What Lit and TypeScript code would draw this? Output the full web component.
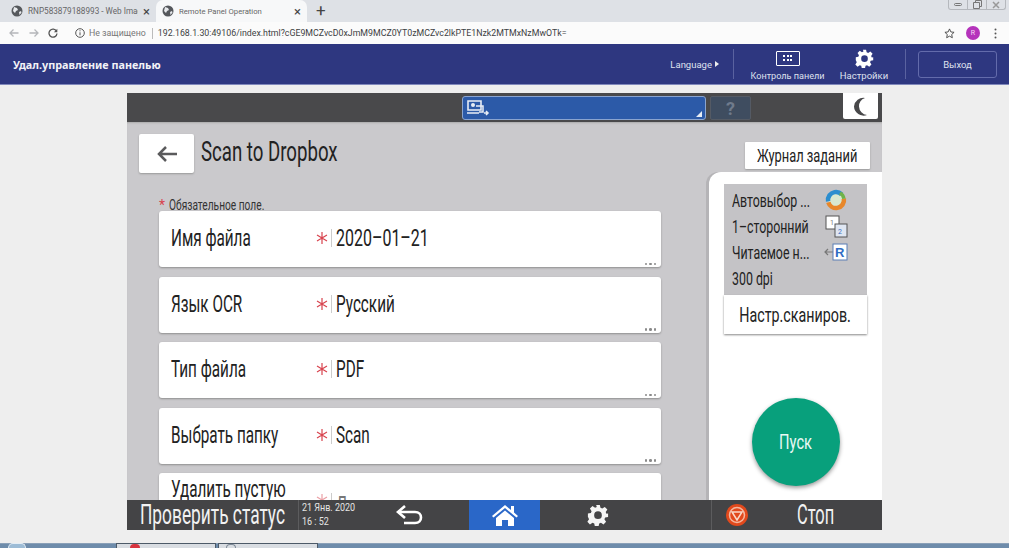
import { LitElement, html, css } from "lit";
import { customElement } from "lit/decorators.js";

const gear = (s: number, c = "#fff") => html`<svg width=${s} height=${s} viewBox="0 0 24 24"><path fill=${c} fill-rule="evenodd" d="M10 1h4l.7 3.2 1.9.8 2.8-1.8 2.8 2.8-1.8 2.8.8 1.9L23 10.4v3.700l-3.200.7-.8 1.900 1.800 2.800-2.800 2.800-2.800-1.800-1.900.8-.7 3.200h-4l-.7-3.200-1.900-.8-2.800 1.800-2.800-2.800 1.800-2.800-.8-1.900L1 14.100v-3.700l3.200-.7.8-1.900L3.200 5 6 2.200 8.800 4l1.900-.8zM12 8a4.200 4.200 0 1 0 0 8.400A4.200 4.200 0 0 0 12 8z"/></svg>`;

const globe = html`<svg width="12" height="12" viewBox="0 0 12 12" style="flex:none"><circle cx="6" cy="6" r="5.500" fill="#55585c"/><path fill="#e8eaed" d="M3 2l3 1 1 2-2 1-1 2-2-2zM8 7l2-1 .5 1.500L8.500 10z"/></svg>`;

const star = html`<svg width="12" height="14" viewBox="0 0 12 14"><path d="M6 1v12M1 4l10 6M11 4L1 10" stroke="#d8434e" stroke-width="1.200" fill="none"/></svg>`;

const fields = [
  ["Имя файла", "2020–01–21"],
  ["Язык OCR", "Русский"],
  ["Тип файла", "PDF"],
  ["Выбрать папку", "Scan"],
  ["Удалить пустую", "Да"],
];

@customElement("app-root")
export class AppRoot extends LitElement {
  static styles = css`
    :host { display: block; width: 1009px; height: 548px; overflow: hidden; background: #eeeeee; font-family: Roboto, "Noto Sans", sans-serif; color: #222; }
    .page { display: flex; flex-direction: column; height: 548px; }

    .tabs { height: 22px; background: #dee1e6; display: flex; align-items: flex-end; flex: none; }
    .tab { height: 22px; display: flex; align-items: center; color: #666; box-sizing: border-box; white-space: nowrap; overflow: hidden; flex: none; }
    .tab.one { width: 156px; padding-left: 11px; font-size: 8.200px; }
    .tab.two { width: 151px; padding-left: 6px; font-size: 7.700px; background: #f7f8f9; border-radius: 7px 7px 0 0; }
    .tab .t { margin-left: 5px; flex: 1; min-width: 0; overflow: hidden; }
    .tab .x { font-size: 13px; color: #444; margin-right: 6px; margin-left: 5px; flex: none; }
    .plus { font-size: 17px; color: #444; margin-left: 9px; height: 22px; line-height: 21px; flex: none; }
    .winctl { margin-left: auto; margin-right: 3px; align-self: flex-start; width: 58px; height: 10px; border: 1px solid #b5b8bd; border-top: 0; border-radius: 0 0 3px 3px; display: flex; box-sizing: border-box; }
    .winctl span { flex: 1; border-right: 1px solid #b5b8bd; display: flex; align-items: center; justify-content: center; }
    .winctl span:last-child { border-right: 0; }

    .addr { height: 22px; background: #fbfbfb; display: flex; align-items: center; flex: none; font-size: 8.800px; }
    .nav { display: flex; width: 75px; padding-left: 9px; gap: 9.500px; box-sizing: border-box; align-items: center; flex: none; }
    .insecure { color: #777; margin-left: 4px; }
    .sep { width: 1px; height: 11px; background: #bbb; margin: 0 5px 0 6px; }
    .url { color: #3d3f43; white-space: nowrap; }
    .addr-right { margin-left: auto; display: flex; align-items: center; margin-right: 12px; }
    .avatar { width: 14px; height: 14px; border-radius: 50%; background: #b533bb; color: #f5d6f5; font-size: 7px; display: flex; align-items: center; justify-content: center; margin: 0 14px 0 11px; }

    .head { height: 41px; background: #2e3780; border-bottom: 1px solid #8088bb; box-sizing: border-box; display: flex; align-items: center; color: #fff; flex: none; }
    .brand { font-family: "Noto Sans", sans-serif; font-weight: 700; font-size: 10.800px; margin-left: 13px; color: #f2f2f7; }
    .lang { margin-left: auto; font-size: 9.500px; color: #dfe1ee; display: flex; align-items: center; gap: 3px; }
    .tri { width: 0; height: 0; border-left: 4px solid #eee; border-top: 3.500px solid transparent; border-bottom: 3.500px solid transparent; }
    .vline { width: 1px; height: 30px; background: #5a62a0; flex: none; }
    .lang + .vline { margin-left: 14px; }
    .tool { display: flex; flex-direction: column; align-items: center; justify-content: flex-end; font-size: 9.500px; color: #dfe1ee; height: 33px; gap: 2px; white-space: nowrap; flex: none; }
    .tool.a { margin-left: 17px; width: 73px; font-size: 9.100px; }
    .tool.b { margin-left: 16px; width: 48px; }
    .tool.b + .vline { margin-left: 17px; }
    .kbd { width: 22px; height: 13px; border: 1.500px solid #fff; border-radius: 1px; display: grid; grid-template-columns: repeat(3, 2px); grid-auto-rows: 2px; gap: 1.500px; justify-content: center; align-content: center; margin-bottom: 3px; box-sizing: content-box; }
    .kbd i { background: #fff; }
    .logout { width: 79px; height: 27px; border: 1px solid #636bab; border-radius: 3px; margin: 0 12px 0 12px; display: flex; align-items: center; justify-content: center; font-size: 9.500px; color: #dfe1ee; box-sizing: border-box; }

    .panel { width: 755px; height: 437px; margin: 8px 0 0 127px; display: flex; flex-direction: column; flex: none; font-size: 16px; }
    .cond { display: inline-block; transform: scaleX(.65); transform-origin: left center; white-space: nowrap; }

    .top { height: 29px; background: #49494b; display: flex; align-items: flex-start; flex: none; }
    .select { margin: 3px 0 0 335px; width: 244px; height: 24px; background: #2c5aa8; border: 1px solid #8aa4cf; border-radius: 3px; box-sizing: border-box; display: flex; align-items: center; justify-content: space-between; padding: 0 3px; }
    .corner { align-self: flex-end; width: 0; height: 0; border-left: 6px solid transparent; border-bottom: 6px solid #e8edf5; margin-bottom: 2px; }
    .help { margin: 3px 0 0 4px; width: 41px; height: 24px; background: #3f4d60; border: 1px solid #545a64; border-radius: 2px; box-sizing: border-box; color: #6f7b8c; font-size: 18px; font-weight: 700; display: flex; align-items: center; justify-content: center; }
    .moon { margin-left: auto; margin-right: 4px; width: 35px; height: 26px; background: #fff; border-radius: 0 0 2px 2px; display: flex; align-items: center; justify-content: center; }

    .main { flex: 1; min-height: 0; background: #cac9cc; display: flex; flex-direction: column; box-shadow: inset 0 2px 2px -1px #aaa; }
    .title { height: 50px; box-sizing: border-box; flex: none; display: flex; align-items: flex-start; padding: 12px 12px 0 12px; }
    .back { width: 55px; height: 39px; background: #fff; border-radius: 2px; box-shadow: 0 1px 2px #999; display: flex; align-items: center; justify-content: center; flex: none; }
    .title h1 { margin: 6px 0 0 7px; font-weight: 400; font-size: 27px; line-height: 24px; color: #222; flex: 1; }
    .title h1 .cond { transform: scaleX(.69); }
    .journal { width: 125px; height: 27px; margin-top: 8px; background: #fff; border-radius: 1px; box-shadow: 0 1px 2px #999; display: flex; align-items: center; justify-content: center; font-size: 18.500px; color: #222; flex: none; }
    .journal .cond { transform: scaleX(.695); transform-origin: center; }

    .cols { flex: 1; min-height: 0; display: flex; }
    .left { width: 582px; flex: none; box-sizing: border-box; padding: 27px 0 0 32px; overflow: hidden; }
    .req { height: 12px; font-size: 14px; line-height: 12px; color: #333; display: flex; }
    .req b { color: #d8434e; font-weight: 400; width: 10px; flex: none; }
    .req .cond { transform: scaleX(.727); }
    .list { display: flex; flex-direction: column; gap: 9.500px; width: 502px; }
    .field { position: relative; height: 56px; flex: none; background: #fff; border-radius: 3px; box-shadow: 0 1px 2px #8f8f8f; display: flex; align-items: center; box-sizing: border-box; padding: 0 0 2px 12px; font-size: 23.500px; color: #222; }
    .field .lab { width: 145px; flex: none; }
    .field .star { width: 15px; display: flex; flex: none; }
    .field .bar { width: 1px; height: 18px; background: #ccc; margin-right: 4px; flex: none; }
    .field .wide { transform: scaleX(.68); }
    .dots { position: absolute; right: 5px; bottom: 2px; display: flex; gap: 2px; }
    .dots i { width: 2.500px; height: 2.500px; background: #8a8a8a; border-radius: 50%; }
    .field.clip { align-items: flex-start; padding-top: 2px; }
    .field.clip .star { margin-top: 18px; opacity: .5; }
    .field.clip .val { margin-top: 16px; color: #777; }
    .field.clip .bar { margin-top: 18px; }

    .right { width: 173px; flex: none; background: #fff; border-radius: 12px 0 0 0; box-shadow: -3px 0 0 #b5b4b7; box-sizing: border-box; padding: 12px 15px 0; display: flex; flex-direction: column; }
    .summary { background: #c4c3c6; height: 111px; flex: none; box-sizing: border-box; padding: 3px 0 0 8px; display: flex; flex-direction: column; font-size: 19px; }
    .row { height: 26px; display: grid; grid-template-columns: 92px 24px; align-items: center; color: #222; }
    .setup { height: 39px; background: #fff; box-shadow: 0 1px 2px #888; display: flex; align-items: center; justify-content: center; font-size: 21px; color: #222; flex: none; }
    .setup .cond { transform: scaleX(.68); transform-origin: center; }
    .start { width: 88px; height: 88px; border-radius: 50%; background: #08a07c; margin: 64px 0 0 28px; box-shadow: 0 2px 4px #999; color: #e8f8f4; display: flex; align-items: center; justify-content: center; font-size: 21px; flex: none; }
    .start .cond { transform: scaleX(.7); transform-origin: center; }

    .bottom { height: 30px; background: #444446; display: flex; align-items: stretch; color: #f2f2f2; flex: none; }
    .status { width: 171px; box-sizing: border-box; padding-left: 13px; font-size: 27px; display: flex; align-items: center; flex: none; }
    .status .cond { transform: scaleX(.642); }
    .date { width: 53px; box-sizing: border-box; border-left: 1px solid #5c5c5e; padding: 1px 0 0 3px; font-size: 11.500px; line-height: 13.500px; color: #e4e4e4; flex: none; }
    .date .cond { display: block; transform: scaleX(.78); }
    .cell { display: flex; align-items: center; justify-content: center; flex: none; }
    .c-back { width: 118px; }
    .c-home { width: 71px; background: #2a67c8; }
    .c-gear { width: 116px; }
    .gap { width: 55px; flex: none; }
    .stop { flex: 1; min-width: 0; border-left: 1px solid #5c5c5e; display: flex; align-items: center; padding-left: 13px; font-size: 27px; }
    .stop svg { flex: none; }
    .stop .cond { margin-left: 48px; transform: scaleX(.61); }

    .below { flex: 1; }
    .task { height: 5px; background: #6e8cab; flex: none; display: flex; box-shadow: inset 0 1px 0 #8aa0b8; }
    .orb { width: 18px; height: 5px; margin-left: 8px; flex: none; background: #9dbcd6; border: 1px solid #e4edf5; border-bottom: 0; border-radius: 9px 9px 0 0; box-sizing: border-box; }
    .btn { display: block; height: 5px; background: #d9dde2; border: 1px solid #4d5a68; border-bottom: 0; box-sizing: border-box; flex: none; }
    .btn.t1 { margin-left: 90px; width: 100px; padding-left: 13px; }
    .btn.t2 { margin-left: 2px; width: 100px; padding-left: 7px; }
    .btn span { display: block; width: 10px; height: 4px; border-radius: 5px 5px 0 0; }
    .btn.t1 span { background: #d8343f; }
    .btn.t2 span { border: 1px solid #7f8b98; border-bottom: 0; box-sizing: border-box; }
  `;

  private field(f: string[], i: number) {
    const clip = i === 4;
    return html`<div class="field ${clip ? "clip" : ""}">
      <span class="lab"><span class="cond">${f[0]}</span></span>
      <span class="star">${star}</span><span class="bar"></span>
      <span class="val"><span class="cond ${i === 0 ? "wide" : ""}">${f[1]}</span></span>
      ${clip ? "" : html`<span class="dots"><i></i><i></i><i></i></span>`}
    </div>`;
  }

  render() {
    return html`<div class="page">
      <div class="tabs">
        <div class="tab one">${globe}<span class="t">RNP583879188993 - Web Image</span><span class="x">×</span></div>
        <div class="tab two">${globe}<span class="t">Remote Panel Operation</span><span class="x">×</span></div>
        <span class="plus">+</span>
        <div class="winctl">
          <span><svg width="8" height="3"><rect x=".5" y=".5" width="7" height="2" rx="1" fill="none" stroke="#777"/></svg></span>
          <span><svg width="9" height="9"><path d="M.5 2.500h6v6h-6zM2.500 2.500v-2h6v6h-2" fill="none" stroke="#777"/></svg></span>
          <span><svg width="8" height="8"><path d="M1 1l6 6M7 1L1 7" stroke="#999" stroke-width="1.500"/></svg></span>
        </div>
      </div>
      <div class="addr">
        <div class="nav">
          <svg width="10" height="10" viewBox="0 0 10 10"><path d="M9.500 5H1M4.500 1.500L1 5l3.500 3.500" fill="none" stroke="#b5b7ba" stroke-width="1.300"/></svg>
          <svg width="10" height="10" viewBox="0 0 10 10"><path d="M.5 5H9M5.500 1.500L9 5 5.500 8.500" fill="none" stroke="#b5b7ba" stroke-width="1.300"/></svg>
          <svg width="10" height="10" viewBox="0 0 10 10"><path d="M8.500 3.200A4 4 0 1 0 9 5.500" fill="none" stroke="#555" stroke-width="1.300"/><path d="M9.300 .8v3.400H5.900z" fill="#555"/></svg>
        </div>
        <svg width="10" height="10" viewBox="0 0 10 10" style="flex:none"><circle cx="5" cy="5" r="4.300" fill="none" stroke="#555"/><path d="M5 4.300v3M5 2.300v1" stroke="#555"/></svg>
        <span class="insecure">Не защищено</span><span class="sep"></span>
        <span class="url">192.168.1.30:49106/index.html?cGE9MCZvcD0xJmM9MCZ0YT0zMCZvc2lkPTE1Nzk2MTMxNzMwOTk=</span>
        <div class="addr-right">
          <svg width="11" height="11" viewBox="0 0 12 12"><path d="M6 1l1.500 3.300 3.500.4-2.600 2.400.7 3.500L6 8.900l-3.100 1.700.7-3.500L1 4.700l3.500-.4z" fill="none" stroke="#444" stroke-width="1"/></svg>
          <span class="avatar">R</span>
          <svg width="3" height="11"><circle cx="1.500" cy="1.500" r="1" fill="#555"/><circle cx="1.500" cy="5.500" r="1" fill="#555"/><circle cx="1.500" cy="9.500" r="1" fill="#555"/></svg>
        </div>
      </div>
      <div class="head">
        <span class="brand">Удал.управление панелью</span>
        <span class="lang">Language<span class="tri"></span></span>
        <span class="vline"></span>
        <div class="tool a"><span class="kbd">${Array.from({ length: 6 }, () => html`<i></i>`)}</span>Контроль панели</div>
        <div class="tool b">${gear(19)}Настройки</div>
        <span class="vline"></span>
        <div class="logout">Выход</div>
      </div>

      <div class="panel">
        <div class="top">
          <div class="select">
            <svg width="24" height="19" viewBox="0 0 24 19">
              <path d="M2 2h13v9H2zM1 14h12" fill="none" stroke="#e8edf5" stroke-width="1.600"/>
              <circle cx="7" cy="6" r="2" fill="#e8edf5"/>
              <path d="M10 7h7v6h-4M18 14h4M20 12l2 2-2 2" fill="none" stroke="#e8edf5" stroke-width="1.500"/>
            </svg>
            <span class="corner"></span>
          </div>
          <div class="help">?</div>
          <div class="moon"><svg width="16" height="19" viewBox="0 0 16 19"><path d="M12 1A9 9 0 0 0 6 9.500 9 9 0 0 0 14 18 9.500 9.500 0 0 1 1 9.500 9.500 9.500 0 0 1 12 1z" fill="#48484a"/></svg></div>
        </div>
        <div class="main">
          <div class="title">
            <div class="back"><svg width="22" height="18" viewBox="0 0 22 18"><path d="M21 9H3M10 2L3 9l7 7" fill="none" stroke="#5a5a5c" stroke-width="2.500"/></svg></div>
            <h1><span class="cond">Scan to Dropbox</span></h1>
            <div class="journal"><span class="cond">Журнал заданий</span></div>
          </div>
          <div class="cols">
            <div class="left">
              <div class="req"><b>*</b><span class="cond">Обязательное поле.</span></div>
              <div class="list">${fields.map((f, i) => this.field(f, i))}</div>
            </div>
            <div class="right">
              <div class="summary">
                <div class="row"><span><span class="cond">Автовыбор ...</span></span>
                  <svg width="24" height="24" viewBox="0 0 24 24"><circle cx="12" cy="12" r="7.500" fill="#d8e8d0"/><circle cx="12" cy="12" r="8" fill="none" stroke="#e8872a" stroke-width="4.500" stroke-dasharray="24 27" transform="rotate(-10 12 12)"/><circle cx="12" cy="12" r="8" fill="none" stroke="#2b8ecf" stroke-width="4.500" stroke-dasharray="20 31" transform="rotate(170 12 12)"/><circle cx="12" cy="12" r="8" fill="none" stroke="#6fb34a" stroke-width="3.500" stroke-dasharray="7 44" transform="rotate(300 12 12)"/></svg></div>
                <div class="row"><span><span class="cond">1–сторонний</span></span>
                  <svg width="24" height="24" viewBox="0 0 24 24"><rect x="2" y="2" width="13" height="13" fill="#fff" stroke="#555"/><rect x="11" y="10" width="12" height="13" fill="#dfe6f2" stroke="#555"/><text x="6" y="11" font-size="7" fill="#777">1</text><text x="14" y="20" font-size="7" fill="#3b6fbf">2</text></svg></div>
                <div class="row"><span><span class="cond">Читаемое н...</span></span>
                  <svg width="24" height="24" viewBox="0 0 24 24"><path d="M10 12H1M4 9l-3 3 3 3" fill="none" stroke="#777" stroke-width="1.200"/><rect x="9" y="4" width="14" height="16" fill="#fff" stroke="#5b7fb5"/><text x="11" y="17" font-size="13" font-weight="700" fill="#2f6cc4" font-family="Liberation Sans">R</text></svg></div>
                <div class="row"><span><span class="cond">300 dpi</span></span></div>
              </div>
              <div class="setup"><span class="cond">Настр.сканиров.</span></div>
              <div class="start"><span class="cond">Пуск</span></div>
            </div>
          </div>
        </div>
        <div class="bottom">
          <div class="status"><span class="cond">Проверить статус</span></div>
          <div class="date"><span class="cond">21 Янв. 2020</span><span class="cond">16 : 52</span></div>
          <div class="cell c-back"><svg width="30" height="22" viewBox="0 0 30 22"><path d="M10 2L3 8l7 6" fill="none" stroke="#fff" stroke-width="2.600"/><path d="M3 8h17c4 0 6 2.500 6 5.500S24 19 20 19H9" fill="none" stroke="#fff" stroke-width="2.600"/></svg></div>
          <div class="cell c-home"><svg width="28" height="24" viewBox="0 0 28 24"><path d="M14 2L1 13l1.500 1.500L14 5l11.500 9.500L27 13l-4-3.400V3h-3v4z" fill="#fff"/><path d="M5 15l9-7.500L23 15v8h-6v-6h-6v6H5z" fill="#fff"/></svg></div>
          <div class="cell c-gear">${gear(22, "#f5f5f5")}</div>
          <div class="gap"></div>
          <div class="stop">
            <svg width="24" height="24" viewBox="0 0 24 24"><circle cx="12" cy="12" r="11" fill="#e2491c"/><circle cx="12" cy="12" r="7.500" fill="none" stroke="#f4b8a0" stroke-width="1.500"/><path d="M7 9h10l-5 8z" fill="none" stroke="#f8d8c8" stroke-width="1.500"/></svg>
            <span class="cond">Стоп</span>
          </div>
        </div>
      </div>
      <div class="below"></div>
      <div class="task"><span class="orb"></span><i class="btn t1"><span></span></i><i class="btn t2"><span></span></i></div>
    </div>`;
  }
}
